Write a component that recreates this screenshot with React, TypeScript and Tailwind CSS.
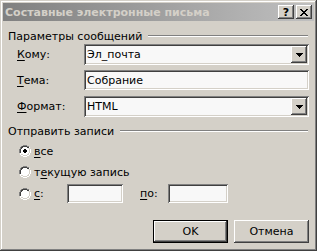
import React from "react";

const font = { fontFamily: '"DejaVu Sans", sans-serif' };

const sunken =
  "bg-[#f8f8f8] shadow-[inset_1px_1px_#808080,inset_-1px_-1px_#ffffff,inset_2px_2px_#404040,inset_-2px_-2px_#d4d0c8]";
const raised =
  "bg-[#d4d0c8] shadow-[inset_-1px_-1px_#404040,inset_1px_1px_#ffffff,inset_-2px_-2px_#808080,inset_2px_2px_#d4d0c8]";

function U({ children }: { children: React.ReactNode }) {
  return <span className="underline underline-offset-2 decoration-1">{children}</span>;
}

function GroupHeader({ label }: { label: string }) {
  return (
    <div className="flex items-center h-[14px] pl-[5px] pr-[6px]">
      <span className="whitespace-nowrap pr-[6px]">{label}</span>
      <div className="flex-1 h-[2px] border-t border-t-[#808080] border-b border-b-white" />
    </div>
  );
}

function Arrow() {
  return (
    <svg width="7" height="4" viewBox="0 0 7 4">
      <path d="M0 0h7v1h-1v1h-1v1h-1v1h-1v-1h-1v-1h-1v-1h-1z" fill="#000" />
    </svg>
  );
}

function Combo({ value }: { value: string }) {
  return (
    <div className={`relative flex items-center h-[21px] w-[225px] ${sunken}`}>
      <span className="pl-[3px]">{value}</span>
      <div className={`absolute right-[2px] top-[2px] w-[16px] h-[17px] flex items-center justify-center ${raised}`}>
        <Arrow />
      </div>
    </div>
  );
}

function Row({ label, children, className = "" }: { label: React.ReactNode; children: React.ReactNode; className?: string }) {
  return (
    <div className={`flex items-center ${className}`}>
      <div className="w-[81px] pl-[14px]">{label}</div>
      {children}
    </div>
  );
}

function Radio({ checked }: { checked?: boolean }) {
  return (
    <div className="relative w-[12px] h-[12px] shrink-0">
      <svg width="12" height="12" viewBox="0 0 12 12" className="absolute inset-0">
        <path d="M4 0h4v1h2v1h1v2h1v4h-1v2h-1v1h-2v1h-4v-1h-2v-1h-1v-2h-1v-4h1v-2h1v-1h2z" fill="#ffffff" />
        <path d="M4 0h4v1h2v1h-2v-1h-4v1h-2v2h-1v4h-1v-4h1v-2h1v-1h2z" fill="#808080" />
        <path d="M4 1h4v1h2v1h-2v-1h-4v1h-1v1h-1v4h-1v-4h1v-2h1v-1h1z" fill="#404040" />
        <path d="M10 2h1v2h1v4h-1v2h-1v1h-2v1h-4v-1h-2v-1h2v1h4v-1h2v-2h1v-4h-1z" fill="#ffffff" />
        <path d="M10 3h1v1h0v4h-1v2h-2v1h-4v-1h-2v-1h2v1h4v-1h1v-1h1v-4h-1z" fill="#d4d0c8" />
        {checked && <path d="M5 4h2v1h1v2h-1v1h-2v-1h-1v-2h1z" fill="#000" />}
      </svg>
    </div>
  );
}

export default function App() {
  return (
    <div
      style={font}
      className="w-[317px] h-[251px] bg-[#d4d0c8] text-[11px] text-black p-[3px] shadow-[inset_-1px_-1px_#404040,inset_1px_1px_#d4d0c8,inset_-2px_-2px_#808080,inset_2px_2px_#ffffff] flex flex-col leading-none"
    >
      <div className="h-[18px] flex items-center bg-gradient-to-r from-[#808080] to-[#c0c0c0] pl-[2px] pr-[2px]">
        <span className="flex-1 font-bold text-[#d4d0c8] text-[11px]">Составные электронные письма</span>
        <div className="flex items-center">
          <div className={`w-[16px] h-[14px] flex items-center justify-center font-bold text-[11px] ${raised}`}>?</div>
          <div className={`ml-[2px] w-[16px] h-[14px] flex items-center justify-center ${raised}`}>
            <svg width="8" height="7" viewBox="0 0 8 7">
              <path d="M0 0h2v1h1v1h2v-1h1v-1h2v1h-1v1h-1v1h-1v1h1v1h1v1h1v1h-2v-1h-1v-1h-2v1h-1v1h-2v-1h1v-1h1v-1h1v-1h-1v-1h-1v-1h-1z" fill="#000" />
            </svg>
          </div>
        </div>
      </div>

      <div className="mt-[8px]">
        <GroupHeader label="Параметры сообщений" />
      </div>
      <Row className="mt-[1px]" label={<><U>К</U>ому:</>}>
        <Combo value="Эл_почта" />
      </Row>
      <Row className="mt-[5px]" label={<><U>Т</U>ема:</>}>
        <div className={`flex items-center h-[20px] w-[225px] ${sunken}`}>
          <span className="pl-[3px]">Собрание</span>
        </div>
      </Row>
      <Row className="mt-[6px]" label={<><U>Ф</U>ормат:</>}>
        <Combo value="HTML" />
      </Row>

      <div className="mt-[7px]">
        <GroupHeader label="Отправить записи" />
      </div>

      <div className="mt-[5px] h-[16px] flex items-center pl-[16px] gap-[3px]">
        <Radio checked />
        <span><U>в</U>се</span>
      </div>
      <div className="mt-[5px] h-[16px] flex items-center pl-[16px] gap-[3px]">
        <Radio />
        <span>т<U>е</U>кущую запись</span>
      </div>
      <div className="mt-[4px] h-[19px] flex items-center pl-[16px]">
        <Radio />
        <span className="ml-[3px] w-[33px]"><U>с</U>:</span>
        <div className={`w-[56px] h-[19px] ${sunken}`} />
        <span className="ml-[17px] w-[28px]"><U>п</U>о:</span>
        <div className={`w-[60px] h-[19px] ${sunken}`} />
      </div>

      <div className="mt-[17px] flex justify-end pr-[5px] gap-[6px]">
        <div className="w-[75px] h-[23px] border border-black">
          <div className={`w-full h-full flex items-center justify-center ${raised}`}>OK</div>
        </div>
        <div className={`w-[75px] h-[23px] flex items-center justify-center ${raised}`}>Отмена</div>
      </div>
    </div>
  );
}
